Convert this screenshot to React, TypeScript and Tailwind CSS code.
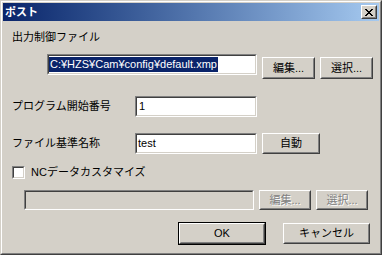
import React from 'react';

const raised =
  'border border-t-white border-l-white border-r-[#404040] border-b-[#404040] bg-[#d4d0c8]';
const raisedInner =
  'flex h-full w-full items-center justify-center border border-t-[#d4d0c8] border-l-[#d4d0c8] border-r-[#808080] border-b-[#808080]';
const sunken =
  'border border-t-[#808080] border-l-[#808080] border-r-white border-b-white';
const sunkenInner =
  'h-full w-full border border-t-[#404040] border-l-[#404040] border-r-[#d4d0c8] border-b-[#d4d0c8]';

const Button: React.FC<{ label: string; className: string; disabled?: boolean }> = ({ label, className, disabled }) => (
  <div className={`${raised} ${className}`}>
    <div className={raisedInner}>
      <span
        className={
          disabled
            ? 'text-[#808080] [text-shadow:1px_1px_0_#ffffff]'
            : 'text-black'
        }
      >
        {label}
      </span>
    </div>
  </div>
);

const Field: React.FC<{ className: string; disabled?: boolean; children?: React.ReactNode }> = ({ className, disabled, children }) => (
  <div className={`${sunken} ${className}`}>
    <div className={`${sunkenInner} flex items-center ${disabled ? 'bg-[#d4d0c8]' : 'bg-white'}`}>{children}</div>
  </div>
);

export default function App() {
  return (
    <div className="w-[382px] h-[255px] border border-t-[#d4d0c8] border-l-[#d4d0c8] border-r-[#404040] border-b-[#404040] bg-[#d4d0c8] font-['Liberation_Sans','Noto_Sans_CJK_JP',sans-serif] text-[11px] leading-[13px] text-black select-none">
      <div className="h-full border border-t-white border-l-white border-r-[#808080] border-b-[#808080] p-px flex flex-col">
        {/* title bar */}
        <div className="h-[18px] flex items-center justify-between bg-gradient-to-r from-[#0a246a] to-[#a6caf0] pl-[2px] pr-[2px]">
          <span className="font-bold text-white text-[11px]">ポスト</span>
          <div className={`${raised} w-[16px] h-[14px]`}>
            <div className={raisedInner}>
              <svg width="8" height="7" viewBox="0 0 8 7" shapeRendering="crispEdges">
                <path d="M0 0h2v1h-2zM6 0h2v1h-2zM1 1h2v1h-2zM5 1h2v1h-2zM2 2h4v1h-4zM3 3h2v1h-2zM2 4h4v1h-4zM1 5h2v1h-2zM5 5h2v1h-2zM0 6h2v1h-2zM6 6h2v1h-2z" fill="#000" />
              </svg>
            </div>
          </div>
        </div>

        <div className="flex flex-col pt-[10px]">
          <div className="h-[13px] ml-[9px]">出力制御ファイル</div>

          <div className="h-[25px] mt-[10px] flex items-start">
            <Field className="ml-[44px] w-[210px] h-[21px]">
              <span className="bg-[#0a246a] text-white leading-[15px] px-px">C:¥HZS¥Cam¥config¥default.xmp</span>
            </Field>
            <Button label="編集..." className="ml-[5px] mt-[3px] w-[53px] h-[22px]" />
            <Button label="選択..." className="ml-[5px] mt-[3px] w-[53px] h-[22px]" />
          </div>

          <div className="h-[21px] mt-[17px] flex items-center">
            <span className="ml-[9px] w-[123px]">プログラム開始番号</span>
            <Field className="w-[122px] h-[21px]">
              <span className="pl-[2px]">1</span>
            </Field>
          </div>

          <div className="h-[21px] mt-[16px] flex items-center">
            <span className="ml-[9px] w-[123px]">ファイル基準名称</span>
            <Field className="w-[122px] h-[21px]">
              <span className="pl-[1px]">test</span>
            </Field>
            <Button label="自動" className="ml-[5px] w-[58px] h-[21px]" />
          </div>

          <div className="h-[13px] mt-[12px] flex items-center">
            <div className={`${sunken} ml-[9px] w-[13px] h-[13px]`}>
              <div className={`${sunkenInner} bg-white`} />
            </div>
            <span className="ml-[6px]">NCデータカスタマイズ</span>
          </div>

          <div className="h-[20px] mt-[11px] flex items-center">
            <Field disabled className="ml-[21px] w-[230px] h-[20px]" />
            <Button disabled label="編集..." className="ml-[5px] w-[52px] h-[20px]" />
            <Button disabled label="選択..." className="ml-[5px] w-[52px] h-[20px]" />
          </div>

          <div className="h-[23px] mt-[12px] flex items-start">
            <div className="ml-[175px] w-[88px] h-[23px] border border-black">
              <Button label="OK" className="w-full h-full" />
            </div>
            <Button label="キャンセル" className="ml-[17px] mt-px w-[87px] h-[21px]" />
          </div>
        </div>
      </div>
    </div>
  );
}
